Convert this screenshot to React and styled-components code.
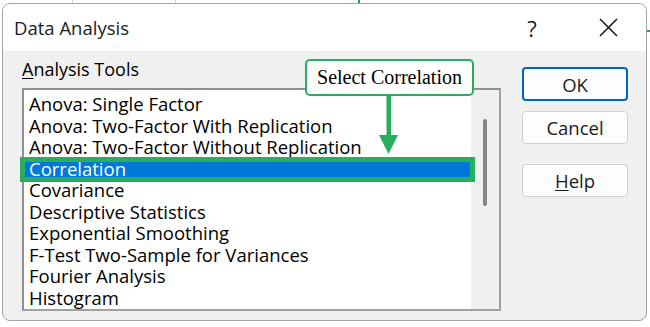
import React from 'react'
import styled, { createGlobalStyle } from 'styled-components'

const GlobalStyle = createGlobalStyle`
  body {
    margin: 0;
    background-color: #ffffff;
    background-image:
      linear-gradient(#d4d4d4, #d4d4d4),
      linear-gradient(#d4d4d4, #d4d4d4),
      linear-gradient(#21a366, #21a366),
      linear-gradient(#21a366, #21a366);
    background-size: 1px 100%, 1px 100%, 2px 4px, 4px 2px;
    background-position: 72px 0, 175px 0, 358px 0, 646px 30px;
    background-repeat: no-repeat;
  }
`

const green = '#27ae60'

const Dialog = styled.div`
  position: relative;
  margin: 3px 0 0 2px;
  width: 645px;
  height: 318px;
  box-sizing: border-box;
  border: 1px solid #a3a3a3;
  border-radius: 8px;
  overflow: hidden;
  background: #f0f0f0;
  display: flex;
  flex-direction: column;
  font-family: "Open Sans", "Noto Sans", sans-serif;
  font-weight: 500;
  color: #000;
`

const TitleBar = styled.div`
  height: 47px;
  flex: none;
  background: #ffffff;
  display: flex;
  align-items: center;
  padding: 0 15px 0 11px;
`

const Title = styled.div`
  flex: 1;
  font-size: 18.5px;
  color: #1b1b1b;
`

const TitleButton = styled.div`
  width: 46px;
  display: flex;
  justify-content: center;
  align-items: center;
  font-size: 22px;
  color: #1b1b1b;
  margin-left: ${props => props.gap || 0}px;
`

const Body = styled.div`
  flex: 1;
  display: flex;
  gap: 21px;
  padding: 7px 15px 0 19px;
`

const LeftColumn = styled.div`
  width: 479px;
  display: flex;
  flex-direction: column;
`

const Label = styled.div`
  font-size: 18px;
  line-height: 22px;
`

const Key = styled.span`
  text-decoration: underline;
  text-underline-offset: 2px;
`

const ListBox = styled.div`
  margin-top: 8px;
  height: 223px;
  box-sizing: border-box;
  border: 2px solid #a0a0a0;
  border-top-color: #8f8f8f;
  border-left-color: #8f8f8f;
  background: #ffffff;
  display: flex;
`

const Items = styled.div`
  flex: 1;
  padding-top: 3px;
`

const Item = styled.div`
  position: relative;
  height: 21.5px;
  line-height: 21.5px;
  padding-left: 5px;
  font-size: 18.5px;
  white-space: nowrap;
  background: ${props => (props.selected ? '#0078d7' : 'transparent')};
  color: ${props => (props.selected ? '#ffffff' : '#000000')};

  &::after {
    content: '';
    display: ${props => (props.selected ? 'block' : 'none')};
    position: absolute;
    top: -1px;
    bottom: -3px;
    left: -4px;
    right: -4px;
    border: 5px solid ${green};
  }
`

const ScrollTrack = styled.div`
  width: 28px;
  background: #f0f0f0;
  display: flex;
  justify-content: center;
  padding-top: 29px;
  box-sizing: border-box;
`

const ScrollThumb = styled.div`
  width: 3.5px;
  height: 87px;
  border-radius: 2px;
  background: #858585;
`

const RightColumn = styled.div`
  width: 106px;
  display: flex;
  flex-direction: column;
  padding-top: 9px;
`

const Button = styled.div`
  height: ${props => (props.primary ? 34 : 33)}px;
  box-sizing: border-box;
  margin-top: ${props => props.space || 0}px;
  border: ${props => (props.primary ? '2px solid #0067c0' : '1px solid #d0d0d0')};
  border-radius: 4px;
  background: #fdfdfd;
  display: flex;
  justify-content: center;
  align-items: center;
  font-size: 18.5px;
  color: #1b1b1b;
`

const Callout = styled.div`
  position: absolute;
  left: 302px;
  top: 55px;
  width: 169px;
  height: 37px;
  box-sizing: border-box;
  border: 2px solid ${green};
  border-radius: 5px;
  background: #ffffff;
  display: flex;
  justify-content: center;
  align-items: center;
  font-family: "Liberation Serif", "Times New Roman", serif;
  font-weight: 400;
  font-size: 20px;
  color: #000;
`

const Arrow = styled.svg`
  position: absolute;
  left: 376px;
  top: 92px;
`

const tools = [
  'Anova: Single Factor',
  'Anova: Two-Factor With Replication',
  'Anova: Two-Factor Without Replication',
  'Correlation',
  'Covariance',
  'Descriptive Statistics',
  'Exponential Smoothing',
  'F-Test Two-Sample for Variances',
  'Fourier Analysis',
  'Histogram'
]

const App = () => {
  const items = tools.map(tool => (
    <Item key={tool} selected={tool === 'Correlation'}>{tool}</Item>
  ))

  return (
    <>
      <GlobalStyle />
      <Dialog>
        <TitleBar>
          <Title>Data Analysis</Title>
          <TitleButton>?</TitleButton>
          <TitleButton gap={30}>
            <svg width='19' height='19' viewBox='0 0 19 19'>
              <path d='M1 1 L18 18 M18 1 L1 18' stroke='#1b1b1b' strokeWidth='1.6' fill='none' />
            </svg>
          </TitleButton>
        </TitleBar>
        <Body>
          <LeftColumn>
            <Label><Key>A</Key>nalysis Tools</Label>
            <ListBox>
              <Items>{items}</Items>
              <ScrollTrack>
                <ScrollThumb />
              </ScrollTrack>
            </ListBox>
          </LeftColumn>
          <RightColumn>
            <Button primary>OK</Button>
            <Button space={10}>Cancel</Button>
            <Button space={20}><Key>H</Key>elp</Button>
          </RightColumn>
        </Body>
        <Callout>Select Correlation</Callout>
        <Arrow width='19' height='58' viewBox='0 0 19 58'>
          <rect x='7.5' y='0' width='4.5' height='42' fill={green} />
          <polygon points='0,39 19,39 9.5,58' fill={green} />
        </Arrow>
      </Dialog>
    </>
  )
}

export default App
